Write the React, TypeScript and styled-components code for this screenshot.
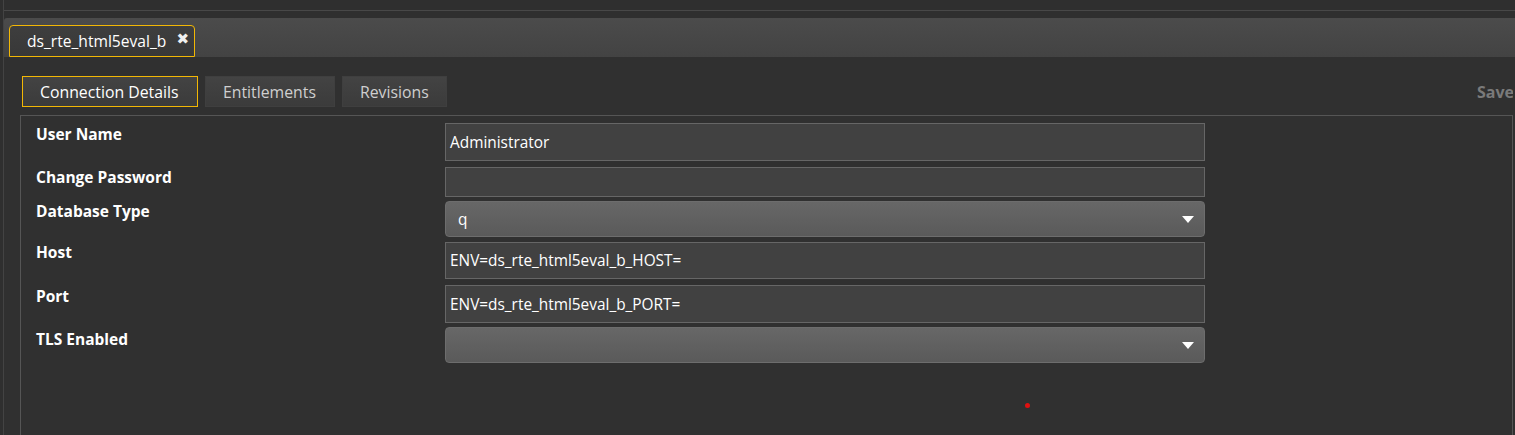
import React from "react";
import styled, { createGlobalStyle } from "styled-components";

const Global = createGlobalStyle`
  html, body { margin: 0; padding: 0; background: #2f2f2f; height: 100%; overflow: hidden; }
  body { font-family: "Open Sans", "Noto Sans", sans-serif; color: #fff; }
  * { box-sizing: border-box; }
`;

const Frame = styled.div`
  margin-left: 3px;
  border-left: 1px solid #434343;
  height: 435px;
  display: flex;
  flex-direction: column;
`;

const TopStrip = styled.div`
  height: 11px;
  border-bottom: 1px solid #484848;
  flex: none;
`;

const HeaderBar = styled.div`
  margin-top: 7px;
  height: 39px;
  flex: none;
  display: flex;
  align-items: flex-end;
  padding-left: 5px;
  border-top-left-radius: 3px;
  background: linear-gradient(#4b4b4b, #434343);
`;

const DocTab = styled.div`
  height: 32px;
  width: 186px;
  display: flex;
  align-items: center;
  padding-left: 17px;
  border: 1px solid #f2b705;
  border-radius: 4px 4px 0 0;
  background: linear-gradient(#3e3e3e, #383838);
  font-size: 15.6px;
  color: #fff;
  position: relative;
`;

const CloseMark = styled.span`
  position: absolute;
  right: 5px;
  top: 4px;
  font-size: 15px;
  font-weight: bold;
  color: #f0f0f0;
  font-family: "DejaVu Sans", sans-serif;
`;

const Body = styled.div`
  flex: 1;
  padding: 19px 2px 0 16px;
  display: flex;
  flex-direction: column;
  background: #303030;
`;

const TabRow = styled.div`
  display: flex;
  align-items: center;
  padding-left: 2px;
  height: 31px;
`;

const SubTab = styled.div<{ $active?: boolean; $w: number; $gap: number }>`
  height: 31px;
  width: ${(p) => p.$w}px;
  margin-right: ${(p) => p.$gap}px;
  padding-left: 17px;
  display: flex;
  align-items: center;
  font-size: 15.8px;
  white-space: nowrap;
  color: ${(p) => (p.$active ? "#ffffff" : "#cfcfcf")};
  border: 1px solid ${(p) => (p.$active ? "#f2b705" : "#3f3f3f")};
  background: linear-gradient(#434343, #3b3b3b);
`;

const Save = styled.div`
  margin-left: auto;
  font-weight: bold;
  font-size: 16px;
  color: #7a7a7a;
  width: 36px;
  overflow: hidden;
  white-space: nowrap;
`;

const Panel = styled.div`
  margin-top: 8px;
  flex: 1;
  border: 1px solid #555;
  border-bottom: none;
  padding: 7px 0 0 15px;
  position: relative;
`;

const Grid = styled.div`
  display: grid;
  grid-template-columns: 409px 760px;
  align-items: start;
`;

const Label = styled.div<{ $top: number }>`
  font-weight: bold;
  font-size: 15.5px;
  color: #fff;
  padding-top: ${(p) => p.$top}px;
  line-height: 20px;
`;

const TextBox = styled.div<{ $h: number; $mb: number }>`
  height: ${(p) => p.$h}px;
  margin-bottom: ${(p) => p.$mb}px;
  border: 1px solid #666;
  background: #414141;
  display: flex;
  align-items: center;
  padding-left: 4px;
  font-size: 15.4px;
  color: #fff;
`;

const SelectBox = styled.div<{ $h: number; $mb: number }>`
  height: ${(p) => p.$h}px;
  margin-bottom: ${(p) => p.$mb}px;
  border: 1px solid #6d6d6d;
  border-radius: 4px;
  background: linear-gradient(#676767, #5a5a5a);
  display: flex;
  align-items: center;
  padding: 0 10px 0 12px;
  font-size: 15.4px;
  color: #fff;
`;

const SelectValue = styled.span`
  flex: 1;
`;

const Arrow = styled.svg`
  width: 12px;
  height: 7px;
  flex: none;
`;

const Dot = styled.div`
  position: absolute;
  left: 1004px;
  top: 287px;
  width: 5px;
  height: 5px;
  border-radius: 50%;
  background: #e01010;
`;

const Caret = () => (
  <Arrow viewBox="0 0 12 7">
    <polygon points="0,0 12,0 6,7" fill="#fff" />
  </Arrow>
);

export default function App() {
  return (
    <>
      <Global />
      <Frame>
        <TopStrip />
        <HeaderBar>
          <DocTab>
            ds_rte_html5eval_b
            <CloseMark>✖</CloseMark>
          </DocTab>
        </HeaderBar>
        <Body>
          <TabRow>
            <SubTab $active $w={176} $gap={7}>Connection Details</SubTab>
            <SubTab $w={130} $gap={7}>Entitlements</SubTab>
            <SubTab $w={105} $gap={0}>Revisions</SubTab>
            <Save>Save</Save>
          </TabRow>
          <Panel>
            <Grid>
              <Label $top={1}>User Name</Label>
              <TextBox $h={38} $mb={6}>Administrator</TextBox>
              <Label $top={0}>Change Password</Label>
              <TextBox $h={30} $mb={4} />
              <Label $top={0}>Database Type</Label>
              <SelectBox $h={36} $mb={5}>
                <SelectValue>q</SelectValue>
                <Caret />
              </SelectBox>
              <Label $top={0}>Host</Label>
              <TextBox $h={37} $mb={6}>ENV=ds_rte_html5eval_b_HOST=</TextBox>
              <Label $top={1}>Port</Label>
              <TextBox $h={38} $mb={4}>ENV=ds_rte_html5eval_b_PORT=</TextBox>
              <Label $top={2}>TLS Enabled</Label>
              <SelectBox $h={36} $mb={0}>
                <SelectValue />
                <Caret />
              </SelectBox>
            </Grid>
            <Dot />
          </Panel>
        </Body>
      </Frame>
    </>
  );
}
